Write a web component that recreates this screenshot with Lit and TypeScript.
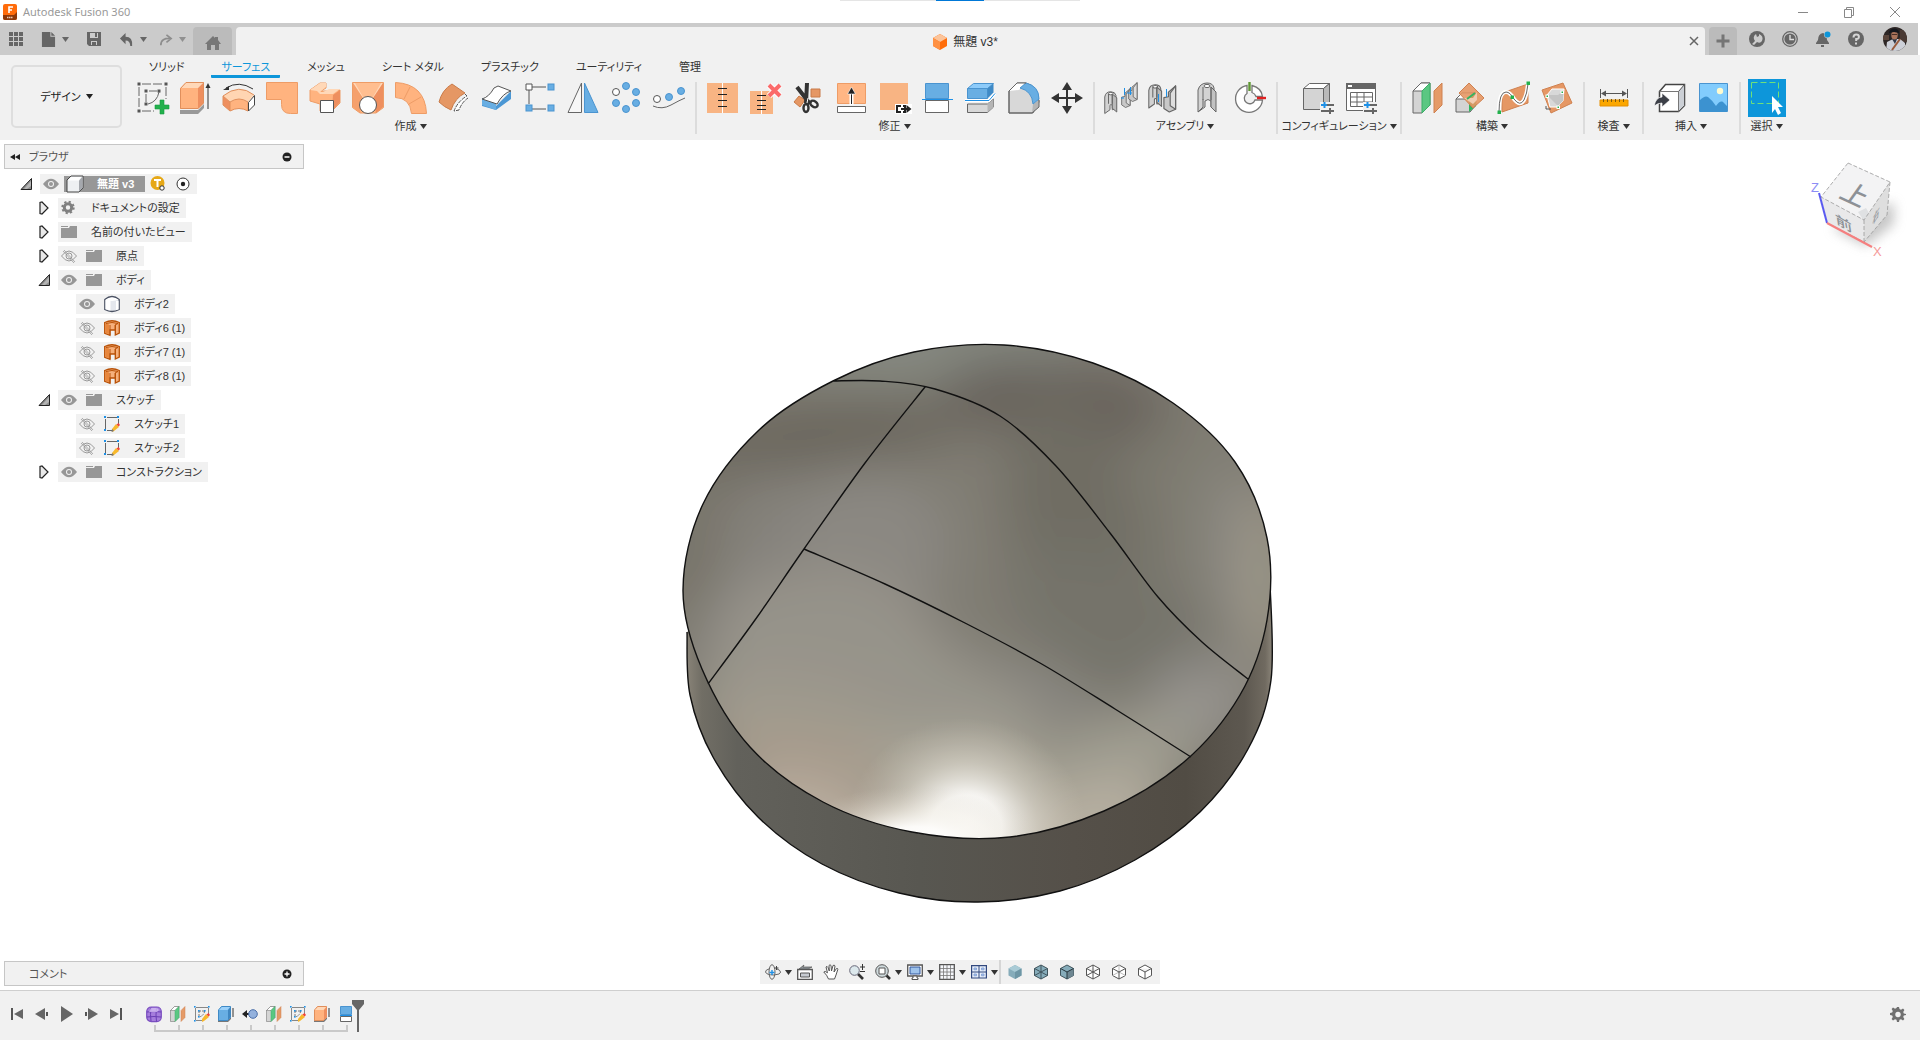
import { LitElement, html, css, svg, nothing, TemplateResult } from "lit";
import { customElement, property, state } from "lit/decorators.js";
import { classMap } from "lit/directives/class-map.js";

type Art = TemplateResult;

/* ---------- shared drawing pieces ---------- */

const planeArt = svg`
  <path d="M1 9 9 1h9v22l-8 8H1z" fill="#d4d4d4" stroke="#666"/>
  <path d="M1 9 9 1h9l-8 8z" fill="#fff" stroke="#666"/>
  <path d="M10 9 18 1v22l-8 8z" fill="#5bc782" stroke="#3cae68"/>
  <path d="M22 9 30 1v22l-8 8z" fill="#e59b68" stroke="#cf8150"/>`;

const sliders = svg`
  <g transform="translate(18 20)" stroke-width="2" fill="none">
    <path d="M1 3h13M1 9h13M10 6v6" stroke="#666"/>
    <path d="M4.500 0v6M1 3h6" stroke="#1e90e6"/>
  </g>`;

const hinge = (x: number, y: number, s: number) => svg`
  <g transform="translate(${x} ${y}) scale(${s})" stroke="#666" stroke-width="1.300" stroke-linejoin="round">
    <path d="M1 30V8Q2 1 9 1q6 0 7 5v18l-5 1v-6q-2-2-3 0v6z" fill="#d2d2d2"/>
    <path d="M11 4l6 5v19l-6-5z" fill="#b9b9b9"/>
    <ellipse cx="9" cy="3.500" rx="3" ry="1.600" fill="#fff"/>
    <path d="M6 4v13M11 4v13" fill="none"/>
  </g>`;

const wing = (x: number, y: number, s: number) => svg`
  <g transform="translate(${x} ${y}) scale(${s})" stroke="#666" stroke-width="1.300" stroke-linejoin="round">
    <path d="M1 14l5-1V8l8-7v26l-7 3-6-4z" fill="#c8c8c8"/>
    <path d="M8 9l6-8v26l-6-4z" fill="#dedede"/>
  </g>`;

const dots = (pts: number[][], r: number, fill: string, stroke: string) =>
  pts.map(([x, y]) => svg`<circle cx=${x} cy=${y} r=${r} fill=${fill} stroke=${stroke}/>`);

const squares = (pts: number[][], s: number, fill: string, stroke: string) =>
  pts.map(([x, y]) => svg`<rect x=${x} y=${y} width=${s} height=${s} fill=${fill} stroke=${stroke}/>`);

const art: Record<string, Art> = {
  /* create */
  sketch: svg`
    <path d="M5 2h22M2 5v22M5 29h12M29 5v12" stroke="#666" fill="none" stroke-dasharray="9 2"/>
    <path d="M12 9h8M9 12v8M22 10Q20 20 11 22" stroke="#666" fill="none"/>
    ${squares([[1, 1], [28, 1], [1, 28], [8, 8], [21, 8], [8, 21]], 2, "#555", "#555")}
    <path d="M23 18h4v5h5v4h-5v5h-4v-5h-5v-4h5z" fill="#22b14c" stroke="#169a3f" stroke-width=".6"/>`,
  extrude: svg`
    <path d="M0 28h18l6-6v4l-6 6H0z" fill="#999"/>
    <path d="M0 6 6 0h18l-6 6z" fill="#ffd8b8"/><path d="M0 6h18v21H0z" fill="#ffb37f"/>
    <path d="M18 6l6-6v21l-6 6z" fill="#ee8f5f"/>
    <path d="M.500 6.500 6 .500h17.500V21L18 26.500H.500z" fill="none" stroke="#e08f5c"/>
    <path d="M28 27V3" stroke="#333"/><path d="M28 1l-2.500 5h5z" fill="#333"/>`,
  revolve: svg`
    <path d="M3 6Q16-2 30 7" fill="none" stroke="#333"/><path d="M0 8l6-4v4z" fill="#333"/>
    <path d="M0 14Q16 1 31 13l-6 7Q16 14 7 20z" fill="#ffd5b2"/>
    <path d="M0 14l7 6v9l-7-6z" fill="#ee8f5f"/>
    <path d="M7 20q9-6 18 0v9q-9-5-18 0z" fill="#ffb37f"/>
    <path d="M0 14Q16 1 31 13M0 14l7 6v9l-7-6zM7 20q9-6 18 0v9q-9-5-18 0" fill="none" stroke="#e08f5c"/>
    <path d="M25.500 20.500l6-7V23l-6 6z" fill="#fff" stroke="#444"/>`,
  sweep: svg`<path d="M.500.500h31v31h-7q-9 0-9-9v-5h-15z" fill="#ffb37f" stroke="#ee9c66"/>`,
  loft: svg`
    <path d="M1 8l10-7h6v5l-5 3h10l9-1v13l-8 8H11v-7L1 19z" fill="#ffb37f" stroke="#ee9c66"/>
    <path d="M1 8l10-7h6v4l-6 5h3l6-3h11l-7 5H11L8 9z" fill="#ffd8b8"/>
    <path d="M24 13l7-5v12l-8 9z" fill="#ee8f5f"/>
    <path d="M11.500 18.500h13v12h-13z" fill="#fff" stroke="#555"/>`,
  patch: svg`
    <path d="M.500.500h31v25L24 31H8L.500 25.500z" fill="#ffb37f" stroke="#ee9c66"/>
    <path d="M1 1h30L22 17H10z" fill="#ffd8b8"/><path d="M31 1v24l-7 6-3-15z" fill="#ee8f5f"/>
    <path d="M1 1v24l7 6 3-15z" fill="#f5a06c"/><path d="M3 1h26l-8 14H11z" fill="#ffbe90"/>
    <circle cx="16" cy="23" r="8.500" fill="#fff" stroke="#555"/>`,
  ruled: svg`
    <path d="M.500.500Q30 2 31.500 31.500h-15Q15 16 .500 15.500z" fill="#ffb37f" stroke="#ee9c66"/>
    <path d="M15 5l-6 12M26 15l-12 7" stroke="#ee9c66"/>`,
  offset: svg`
    <path d="M1 20Q4 8 14 2l13 9Q17 16 13 28 6 25 1 20z" fill="#e59764" stroke="#c97b49"/>
    <path d="M27 12l2 2Q20 19 16 29l5-1q3-8 9-12" fill="#fff" stroke="#555" stroke-dasharray="4 1"/>`,
  thicken: svg`
    <path d="M1 16l14 8L30 9v8L15 28 1 24z" fill="#4b97d4"/><path d="M1 16l14 5v7L1 23z" fill="#68aee3"/>
    <path d="M1 17Q8 15 13 6l4-2 13 5q-8 2-14 13z" fill="#fff" stroke="#555"/>`,
  rectPattern: svg`
    <path d="M8 5h14M5 8v14M8 27h14" stroke="#555"/>
    <path d="M2 2h6v6H2z" fill="#fff" stroke="#555"/>
    ${squares([[24, 2], [2, 23], [24, 23]], 6, "#68aee3", "#4a94d0")}`,
  mirror: svg`
    <path d="M1 30.500 14.500 1v29.500z" fill="#f7f7f7" stroke="#666"/>
    <path d="M17.500 1 31 30.500H17.500z" fill="#68aee3" stroke="#4a94d0"/>`,
  circPattern: svg`
    ${dots([[16, 4], [26, 10], [26, 21], [16, 27], [6, 21]], 3.5, "#68aee3", "#4a94d0")}
    <circle cx="6" cy="10" r="3.500" fill="#fff" stroke="#555"/>`,
  pathPattern: svg`
    <circle cx="4" cy="17" r="3.500" fill="#fff" stroke="#555"/>
    ${dots([[16, 15], [28, 9]], 3.5, "#68aee3", "#4a94d0")}
    <path d="M0 24q9 4 18-1t14-7" fill="none" stroke="#666"/>`,
  /* modify */
  stitch: svg`
    <path d="M0 1h15v30H0zM16 1h15v30H16z" fill="#f8b483"/><path d="M15.500 1v30" stroke="#fff"/>
    <path d="M11 6.500h9M11 12.500h9M11 18.500h9M11 24.500h9" stroke="#222"/>`,
  unstitch: svg`
    <path d="M0 9h23v23H0z" fill="#f8b483"/><path d="M11.500 9v23" stroke="#fff"/>
    <path d="M7 13.500h9M7 18.500h9M7 23.500h9M7 27.500h9" stroke="#222"/>
    <path d="M19 3l11 11M30 3 19 14" stroke="#fff" stroke-width="6"/>
    <path d="M19 3l11 11M30 3 19 14" stroke="#fb6a6a" stroke-width="4"/>`,
  trim: svg`
    <path d="M18 7h9v8h-9z" fill="#e59764" stroke="#c97b49"/><path d="M6 14l6 4-5 7-6-5z" fill="#e59764" stroke="#c97b49"/>
    <path d="M4 5l13 17M14 1l-1 20" stroke="#333" stroke-width="4"/>
    <ellipse cx="13" cy="26" rx="2.500" ry="4" fill="none" stroke="#333" stroke-width="2.400"/>
    <ellipse cx="21" cy="22" rx="4" ry="2.800" transform="rotate(35 21 22)" fill="none" stroke="#333" stroke-width="2.400"/>
    <path d="M15 16l-1 5" stroke="#fff"/>`,
  extend: svg`
    <path d="M1.500 1.500h28v20h-28z" fill="#ffb684" stroke="#ee9c66"/>
    <path d="M1.500 24.500h28v6h-28z" fill="#fff" stroke="#666"/>
    <path d="M15.500 23V9" stroke="#fff" stroke-width="4"/><path d="M15.500 22V8" stroke="#222"/>
    <path d="M15.500 5l-4 7h8z" fill="#222" stroke="#fff" stroke-width=".6"/>`,
  scale: svg`
    <path d="M1 1h28v27H1z" fill="#f8b483"/><path d="M16 22h17v10H16z" fill="#fff"/>
    <path d="M22 24h-4v6h4M24 24h2v2M24 30h2v-2" stroke="#222" stroke-width="2" fill="none"/>
    <path d="M22 27h7" stroke="#222" stroke-width="2"/><path d="M27.500 23l5 4-5 4z" fill="#222"/>`,
  splitFace: svg`
    <path d="M3.500 1.500h23v15h-23z" fill="#68aee3" stroke="#4a94d0"/><path d="M3.500 18.500h23v12h-23z" fill="#fff" stroke="#666"/>
    <path d="M0 17.500h31" stroke="#1e90e6"/>`,
  splitBody: svg`
    <path d="M2.500 22h20l6-5v8l-6 5.500h-20z" fill="#d8d8d8" stroke="#666"/><path d="M22.500 22l6-5v8l-6 5.500z" fill="#b5b5b5"/>
    <path d="M2.500 6.500l6-5h20l-6 5z" fill="#8dcbfa" stroke="#4a94d0"/><path d="M2.500 6.500h20v10h-20z" fill="#68aee3" stroke="#4a94d0"/>
    <path d="M22.500 6.500l6-5v9l-6 6z" fill="#3f8ac6"/><path d="M0 18.500h24l6-7" fill="none" stroke="#fff" stroke-width="3"/>
    <path d="M0 18.500h24l6-7" fill="none" stroke="#1e90e6"/>`,
  fillet: svg`
    <path d="M1 9l8-8h9q12 3 13 19l-6 11H1z" fill="#d8d8d8" stroke="#666"/><path d="M1 9l8-8h8l-6 7z" fill="#fff"/>
    <path d="M25 22l6-4v7l-7 6z" fill="#b5b5b5"/><path d="M12 6l6-5q13 3 13 16l-6 5Q24 9 12 6z" fill="#68aee3" stroke="#4a94d0"/>
    <path d="M1 9l8-8h9M1 9v22h23l7-6v-7" fill="none" stroke="#666"/>`,
  move: svg`
    <path d="M16 4v24M4 16h24" stroke="#333" stroke-width="2"/>
    <path d="M16 0l5 8H11zM16 32l5-8H11zM0 16l8-5v10zM32 16l-8-5v10z" fill="#333"/>`,
  /* assemble */
  newComponent: svg`${hinge(-1, 9, 0.75)}${wing(16, 6, 0.65)}${wing(23, 0, 0.65)}
    <path d="M19.500 6v7M16 16h3M25.500 5v8M22 11h5" stroke="#1e90e6"/>`,
  joint: svg`${hinge(0, 2, 0.8)}${wing(15, 3, 0.9)}
    <path d="M10.500 12v8M18.500 7v8" stroke="#1e90e6"/>`,
  asBuilt: svg`
    <path d="M7 30V8Q9 1 16 1q6 0 7 5v18l-3 1v-6q-3-3-6 0v6z" fill="#d2d2d2" stroke="#666"/>
    <path d="M20 5l5 5v20l-5-5z" fill="#c2c2c2" stroke="#666"/><path d="M12 5v13M20 5v13M7 30l5-5v-8" fill="none" stroke="#666"/>
    <ellipse cx="16" cy="4" rx="3" ry="1.600" fill="#fff" stroke="#666"/>`,
  jointOrigin: svg`
    <path d="M13 3.500A13.500 13.500 0 1 0 28.500 18H21a5.500 5.500 0 1 1-8-6.500z" fill="#fff" stroke="#777" stroke-width="1.300"/>
    <path d="M18 3.500v7q3 1 4 4h6.500q-1-8.500-10.500-11z" fill="#fff" stroke="#777" stroke-width="1.300"/>
    <path d="M15.500 0v9" stroke="#5e9732" stroke-width="2.400"/><path d="M23 16h9" stroke="#e02020" stroke-width="2.400"/>`,
  /* configure */
  configure: svg`
    <path d="M1.500 6.500l6-5h20l-6 5z" fill="#fff" stroke="#666"/><path d="M1.500 6.500h20v21h-20z" fill="#d4d4d4" stroke="#666"/>
    <path d="M21.500 6.500l6-5v20l-6 6z" fill="#b9b9b9" stroke="#666"/><path d="M18 20h14v12H18z" fill="#f1f1f1"/>${sliders}`,
  configTable: svg`
    <path d="M1.500 1.500h29v27h-29z" fill="#fff" stroke="#666"/><path d="M1 1h30v6H1z" fill="#666"/><path d="M3 3h4v2H3z" fill="#fff"/>
    <path d="M5.500 10.500h22v14h-22zM5 15h23M5 20h23M12 10v15M19 10v15" fill="none" stroke="#666"/>
    <path d="M18 20h14v12H18z" fill="#f1f1f1"/>${sliders}`,
  /* construct */
  plane: planeArt,
  planeAngle: svg`
    <path d="M1 17l6-6h14v12l-6 7H1z" fill="#d4d4d4" stroke="#666"/><path d="M1 17l6-6h14l-6 6z" fill="#fff" stroke="#666"/>
    <path d="M14 17l7-6v13l-7 6z" fill="#2fb45e"/>
    <path d="M14 1l15 15-11 10L4 11z" fill="#e59764" fill-opacity=".9" stroke="#cf8150"/>
    <path d="M9 16h9l4-6v8l-4 4z" fill="#f0ccb2"/><path d="M12 17l8-6" stroke="#35b35f" stroke-width="2"/>`,
  planePath: svg`
    <path d="M4 11l26-9v19L4 30z" fill="#e59764" stroke="#cf8150"/>
    <path d="M1 30Q1 10 8 10q4 0 8 7 6 8 10 1 3-6 4-16" fill="none" stroke="#fff" stroke-width="4"/>
    <path d="M1 30Q1 10 8 10q4 0 8 7 6 8 10 1 3-6 4-16" fill="none" stroke="#666"/>
    ${squares([[0, 29], [13, 14], [29, 0]], 2.5, "#22b14c", "#22b14c")}`,
  planePoints: svg`
    <path d="M1 8l21-7 9 20-21 10z" fill="#e59764" stroke="#cf8150"/>
    <path d="M6 13l5-6h12l-1 12-6 6H9z" fill="#d8d8d8" stroke="#fff"/><path d="M6 13h11l6-5-1 11-5 5z" fill="#c4c4c4"/>
    <path d="M5 24v3h5" fill="none" stroke="#555"/>
    ${squares([[5, 13], [20, 9], [16, 24]], 2.5, "#22b14c", "#fff")}`,
  measure: svg`
    <path d="M2.500 7v9M29.500 7v9M4 11.500h24" stroke="#555"/><path d="M3 11.500l5-3v6zM29 11.500l-5-3v6z" fill="#555"/>
    <path d="M2 18h28v6H2z" fill="#fba700" stroke="#e58f00"/>
    <path d="M5.500 17v3M9.500 17v3M13.500 17v3M17.500 17v3M21.500 17v3M25.500 17v3" stroke="#7a5a10"/>`,
  insert: svg`
    <path d="M5.500 9.500l6-7h19v21l-6 6h-19z" fill="#fff" stroke="#444" stroke-width="1.500"/>
    <path d="M24.500 9.500l6-7v21l-6 6z" fill="#ccd0d6" stroke="#555"/><path d="M5.500 9.500h19v20" fill="none" stroke="#777"/>
    <path d="M0 24q2-9 8-9v-4l8 7-8 7v-4q-4 0-8 3z" fill="#3c3f47" stroke="#fff" stroke-width=".7"/>`,
  canvas: svg`
    <path d="M2.500 1.500h28v28h-28z" fill="#82ccfd" stroke="#4a94d0"/><circle cx="23" cy="9" r="3.200" fill="#fffbd0"/>
    <path d="M3 18q5-5 8-3 5 4 8 9 5-7 8-3l3 3v6H3z" fill="#3c92d0"/>`,
  select: svg`
    <path d="M-3-3h38v38H-3z" fill="#0d96da"/><path d="M.500.500h27v21H.500z" fill="none" stroke="#6fe07a" stroke-dasharray="6 3"/>
    <path d="M21 14l11 11h-5l3 6-3 2-3-6-3 4z" fill="#fff"/>`,
  /* 16px set */
  apps: svg`<path d="M1 1h4v4H1zM6 1h4v4H6zM11 1h4v4h-4zM1 6h4v4H1zM6 6h4v4H6zM11 6h4v4h-4zM1 11h4v4H1zM6 11h4v4H6zM11 11h4v4h-4z" fill="#666"/>`,
  file: svg`<path d="M1 0h9v5h5v11H1z" fill="#666"/><path d="M11 0l4 4h-4z" fill="#666"/>`,
  save: svg`<path d="M1 1h14v14H3l-2-2z" fill="#666"/><path d="M4 2h8v5H4z" fill="#ccc"/><path d="M9 2h2v4H9z" fill="#666"/><path d="M5 10h6v4H5z" fill="#ccc"/><path d="M6 11h4v3H6z" fill="#666"/>`,
  undo: svg`<path d="M7 1v4q8 0 7 10h-2q0-6-5-6v4L1 7z" fill="#666"/>`,
  redo: svg`<path d="M9 3l5 4-5 4M14 7Q3 6 3 14" fill="none" stroke="#8d8d8d" stroke-width="1.800"/>`,
  home: svg`<path d="M8 1l2 2V2h3v3l3 4h-2v6h-4v-5H6v5H2V9H0z" fill="#777"/>`,
  close: svg`<path d="M4 4l8 8M12 4l-8 8" stroke="#666" stroke-width="1.500"/>`,
  plus: svg`<path d="M6.500 1.500h3v5h5v3h-5v5h-3v-5h-5v-3h5z" fill="#757575"/>`,
  extensions: svg`<circle cx="8" cy="8" r="8" fill="#666"/><path d="M3 13l3-3q-3-4 1-7l1 3 2-1V3q5 2 3 7-2 3-5 1l-3 3z" fill="#ccc"/>`,
  clock: svg`<circle cx="8" cy="8" r="7.300" fill="none" stroke="#666" stroke-width="1.300"/><circle cx="8" cy="8" r="5.600" fill="#666"/><path d="M8 4v4.500h4" fill="none" stroke="#ddd" stroke-width="1.400"/>`,
  bell: svg`<path d="M8 2q4 1 4 7l2 3v1H1v-1l2-3q0-6 5-7z" fill="#666"/><path d="M6 14h3v2H6z" fill="#666"/><circle cx="12.500" cy="3.500" r="3.500" fill="#ccc"/><circle cx="12.500" cy="3.500" r="3" fill="#0d96da"/>`,
  help: svg`<circle cx="8" cy="8" r="8" fill="#666"/><path d="M5.500 6.500q0-3 2.700-3t2.700 2.300-2.700 2.200v2M8 11.500v2" fill="none" stroke="#d5d5d5" stroke-width="2"/>`,
  cube: svg`<path d="M8 0l7 4v8l-7 4-7-4V4z" fill="#ff6d0a"/><path d="M8 0l7 4-7 4-7-4z" fill="#fcc49a"/><path d="M1 4l7 4v8l-7-4z" fill="#ff9143"/>`,
  minimize: svg`<path d="M3 8.500h10" stroke="#888"/>`,
  restore: svg`<path d="M3.500 5.500h7v8h-7zM5.500 5V3.500h7v8H11" fill="none" stroke="#888"/>`,
  winClose: svg`<path d="M3 3l10 10M13 3L3 13" stroke="#888"/>`,
  gear: svg`<path d="M7 1h2l.5 2 1.500.7 2-1.200 1.400 1.400-1.200 2 .6 1.600L16 8v1l-2.200.5-.6 1.500 1.200 2-1.400 1.400-2-1.200-1.500.6L9 16H7l-.5-2.200-1.500-.6-2 1.200L1.600 13l1.200-2-.6-1.500L0 9V7l2.200-.5L2.800 5 1.600 3 3 1.600l2 1.200L6.500 2z" fill="#707070"/><circle cx="8" cy="8.500" r="2.700" fill="#f1f1f1"/>`,
  gearSmall: svg`<circle cx="7" cy="7.500" r="3.700" stroke="#808080" stroke-width="3"/><circle cx="7" cy="7.500" r="5.700" stroke="#808080" stroke-width="2" stroke-dasharray="2.200 2.270"/>`,
  folder: svg`<path d="M0 2h7v1H0zM0 4h8l1-2h7v12H0z" fill="#979797"/>`,
  eye: svg`<path d="M0 8q8-10.500 16 0-8 10.500-16 0z" fill="#979797"/><circle cx="8" cy="8" r="3" fill="#f1f1f1"/><circle cx="8" cy="8" r="2" fill="#979797"/>`,
  eyeOff: svg`<path d="M.500 8q7.500-10 15 0-7.500 10-15 0z" fill="none" stroke="#999"/><circle cx="8" cy="8" r="3" fill="none" stroke="#999"/><path d="M3 2l11 12M2 3l11 12" stroke="#999" stroke-width=".8"/>`,
  component: svg`<path d="M0 4l4-4h12v12l-4 4H0z" fill="#eef0f2" stroke="#444"/><path d="M1 4.500L4.500 1H15l-3 3.500z" fill="#fff"/><path d="M12 4.500l3.500-4V12L12 15.500z" fill="#a5a8ad"/>`,
  body: svg`<path d="M.800 3.500Q8-2.500 15.200 3.500v10q-7.200 4-14.400 0z" fill="#e4e7ed" stroke="#4b5263" stroke-width="1.300"/><path d="M1.500 4h5v10.500l-5-1.200zM12 5h2.500v8.500L12 14z" fill="#fff"/><path d="M1.500 3.800Q8-1 14.500 3.800 8 6 1.500 3.800z" fill="#fff"/>`,
  surface: svg`<path d="M.700 2.500Q8-1 15.300 2.500V13l-4 2v-5H6v5.300l-5.300-2z" fill="#f6b07c" stroke="#b95208" stroke-width="1.300"/><path d="M1.500 3.500L5 4.500V14l-3.500-1z" fill="#e8863c"/><path d="M2 3.500q6-2 12 0l-3 1.500v5M6 5v10M11.500 5v9" fill="none" stroke="#b95208"/>`,
  sketchItem: svg`<path d="M3 1.500h10M1.500 3v10M14.500 3v6M3 14.500h5" stroke="#666" fill="none"/>${squares([[0, 0], [13, 0], [0, 13]], 2, "#1e90e6", "none")}<path d="M8 13l4-5 3 3-5 4-2 1z" fill="#f8b92c"/><path d="M12.500 8.500l2-1.500 1.500 2-1.500 1.500z" fill="#f0433a"/><path d="M8 13l2 2-2.500 1z" fill="#777"/>`,
  tHot: svg`<circle cx="7.500" cy="7" r="7" fill="#e6a817"/><path d="M4 4h7M7.500 4v7" stroke="#fff" stroke-width="2"/><circle cx="12" cy="12" r="2.200" fill="#fff" stroke="#333"/>`,
  radio: svg`<circle cx="8" cy="8" r="6" fill="#fff" stroke="#333"/><circle cx="8" cy="8" r="2.200" fill="#222"/>`,
  open: svg`<path d="M13.500 2.500v11H3z" fill="#8c8c8c" stroke="#222"/><path d="M13 5v5L9 13H6z" fill="#b5b5b5"/>`,
  closed: svg`<path d="M4 2.500v11l2 .5 6-6-6-6z" fill="#e9e9e9" stroke="#222" stroke-width="1.200"/>`,
  collapse: svg`<path d="M3 8l5-3v6zM8 8l5-3v6z" fill="#222"/>`,
  minusDot: svg`<circle cx="8" cy="8" r="4.500" fill="#222"/><path d="M5.500 8h5" stroke="#fff" stroke-width="1.500"/>`,
  plusDot: svg`<circle cx="8" cy="8" r="4.500" fill="#222"/><path d="M5.500 8h5M8 5.500v5" stroke="#fff" stroke-width="1.300"/>`,
  /* navigation bar */
  orbit: svg`<ellipse cx="7" cy="8" rx="3" ry="7.300" fill="none" stroke="#666"/><path d="M5 4.500Q0 6 .500 8q1 3 8.500 3l5-1q1.500-1 1.500-2 0-2-4.500-3.500" fill="none" stroke="#666"/><path d="M11.500 2v4M9.500 4h4" stroke="#444"/><path d="M7 6v5M4.500 8.500h5" stroke="#1e90e6" stroke-width="1.400"/>`,
  lookAt: svg`<path d="M.700 5.500h14.600v9.800H.700z" fill="#fff" stroke="#555" stroke-width="1.300"/><path d="M3.500 9h9v4h-9z" fill="#c7cbd1" stroke="#555"/><path d="M2 5l5-4-1 2h9L11 5z" fill="#8b9297" stroke="#555" stroke-width=".7"/>`,
  pan: svg`<path d="M5.500 15Q4 11 .800 8q1-1.500 3.700.8L3 3q1-1.500 2 .5L6.300 7 6 1.500q1-1.500 2 0L8.500 7 10 1.500q1.500-1 2 .5L11 8l2.500-3.500q1.500-.5 1.300 1L13 11l-1.500 4z" fill="#fff" stroke="#555"/>`,
  zoom: svg`<path d="M9 10l5 5" stroke="#333" stroke-width="2.600"/><circle cx="5.500" cy="6.500" r="4.800" fill="#dce8ec" stroke="#667" /><path d="M13.500 0v6M11 3h5M11 7.500h5" stroke="#333"/>`,
  fit: svg`<path d="M10 10l5 5" stroke="#333" stroke-width="2.600"/><circle cx="7" cy="7" r="6.300" fill="#cfdadd" stroke="#555"/><path d="M4 4h6v6H4z" fill="#fff" stroke="#555"/>`,
  display: svg`<path d="M.700 1h14.600v11H.700z" fill="#fff" stroke="#555" stroke-width="1.300"/><path d="M3 3h10v7H3z" fill="#9fc3eb" stroke="#31569d"/><path d="M6 12h4v2h1v1.500H5V14h1z" fill="#fff" stroke="#555"/>`,
  grid: svg`<path d="M.700.700h14.600v14.600H.700z" fill="#f4f6fa" stroke="#555" stroke-width="1.300"/><path d="M4.500 1v14M8 1v14M11.500 1v14M1 4.500h14M1 8h14M1 11.500h14" stroke="#777" stroke-width=".8"/>`,
  viewports: svg`<path d="M.600 1.600h14.800v12.400H.600z" fill="#e8effa" stroke="#31487e" stroke-width="1.200"/><path d="M8 2v12M0 8h16" stroke="#31487e"/><path d="M3 4h2.500v1.800H3zM10.500 4H13v1.800h-2.500zM3 10h2.500v1.800H3zM10.500 10H13v1.800h-2.500z" fill="#9fc3eb" stroke="#8aa5d8"/>`,
  shade1: svg`<path d="M8 1l6.500 3.500v7L8 15l-6.500-3.500v-7z" fill="#86acba"/><path d="M8 1l6.500 3.500L8 8 1.500 4.500z" fill="#a9cbd6"/><path d="M8 8l6.500-3.500v7L8 15z" fill="#6e96a5"/>`,
  shade2: svg`<path d="M8 1l6.500 3.500v7L8 15l-6.500-3.500v-7z" fill="#86acba" stroke="#40545c"/><path d="M1.500 4.500L8 8l6.500-3.500M8 1v14M8 8l-6.500 3.500M8 8l6.500 3.500" stroke="#40545c" fill="none"/>`,
  shade3: svg`<path d="M8 1l6.500 3.500v7L8 15l-6.500-3.500v-7z" fill="#86acba" stroke="#40545c"/><path d="M8 8l6.500-3.500v7L8 15z" fill="#6e8792"/><path d="M1.500 4.500L8 8l6.500-3.500M8 8v7" stroke="#26363d" fill="none"/>`,
  wire1: svg`<path d="M8 1l6.500 3.500v7L8 15l-6.500-3.500v-7zM1.500 4.500L8 8l6.500-3.500M8 1v14M8 8l-6.500 3.500M8 8l6.500 3.500" fill="#fff" stroke="#555"/>`,
  wire2: svg`<path d="M8 1l6.500 3.500v7L8 15l-6.500-3.500v-7z" fill="#fff" stroke="#555"/><path d="M8 1v7l-6.500 3.500M8 8l6.500 3.500" fill="none" stroke="#bbb"/><path d="M1.500 4.500L8 8l6.500-3.500M8 8v7" fill="none" stroke="#555"/>`,
  wire3: svg`<path d="M8 1l6.500 3.500v7L8 15l-6.500-3.500v-7zM1.500 4.500L8 8l6.500-3.500M8 8v7" fill="#fff" stroke="#555"/>`,
  /* playback */
  first: svg`<path d="M4 2v12" stroke="#555" stroke-width="2"/><path d="M15 3v10L6 8z" fill="#666"/>`,
  prev: svg`<path d="M12 2v12L2 8z" fill="#666"/><path d="M14 6v4" stroke="#555" stroke-width="2"/>`,
  play: svg`<path d="M3 0l12 8-12 8z" fill="#666"/>`,
  next: svg`<path d="M5 2v12l10-6z" fill="#666"/><path d="M3 6v4" stroke="#555" stroke-width="2"/>`,
  last: svg`<path d="M13 2v12" stroke="#555" stroke-width="2"/><path d="M2 3v10l9-5z" fill="#666"/>`,
  /* timeline features */
  form: svg`<rect x=".7" y="1" width="14.600" height="14.600" rx="4.500" fill="#a57ddc" stroke="#7a4fc0" stroke-width="1.200"/><path d="M5 1.500q-1 7 0 13.500M10.500 2q-1 7 0 13.500M1 6q7-1 14 0M1 11q7-1 14 0" stroke="#6a3fb4" fill="none"/><path d="M5 2h6l2 2-2 2H3z" fill="#d3bdf2" opacity=".8"/>`,
  planeSmall: svg`<g transform="scale(.5)">${planeArt}</g>`,
  sketchSmall: svg`<path d="M2 1.500h12M1.500 2v12M14.500 2v8M2 14.500h7" stroke="#888" fill="none"/><path d="M5 5h5M5 5v6M10.500 5q0 4-5 6" stroke="#777" fill="none" stroke-dasharray="2 1"/>${squares([[0, 0], [14, 0], [0, 14], [4, 4], [10, 4], [4, 10]], 1.6, "#1e90e6", "none")}<path d="M8 13l4-5 3 3-5 4-2 1z" fill="#f8b92c"/><path d="M12.500 8.500l2-1.500 1.500 2-1.500 1.500z" fill="#f0433a"/>`,
  extrudeBlue: svg`<path d="M0 14h10l3-3v2l-3 3H0z" fill="#777"/><path d="M.500 4l3-3.500h9V11l-3 3.500h-9z" fill="#68aee3" stroke="#3f8ac6"/><path d="M10 4l3-3.500V11l-3 3z" fill="#3f86c0"/><path d="M1 4l3-3h8L9.500 4z" fill="#9bd1fa"/><path d="M15 11V2" stroke="#333"/>`,
  pushPull: svg`<path d="M0 8l5-4v3h5v2H5v3z" fill="#222"/><circle cx="11" cy="8" r="4.300" fill="#93b1dd" stroke="#4a6ea8"/>`,
  extrudeOrange: svg`<path d="M0 14h10l3-3v2l-3 3H0z" fill="#777"/><path d="M.500 4l3-3.500h9V11l-3 3.500h-9z" fill="#ffb37f" stroke="#e08f5c"/><path d="M10 4l3-3.500V11l-3 3z" fill="#ee8f5f"/><path d="M1 4l3-3h8L9.500 4z" fill="#ffd8b8"/><path d="M15 11V2" stroke="#333"/>`,
  splitSmall: svg`<path d="M2.500.500h11v8h-11z" fill="#68aee3" stroke="#4a94d0"/><path d="M2.500 10.500h11v5h-11z" fill="#fff" stroke="#666"/><path d="M2 9.500h12" stroke="#1e90e6"/>`,
};

@customElement("tool-icon")
class ToolIcon extends LitElement {
  @property() name = "";
  @property({ type: Number }) size = 16;

  static styles = css`
    :host { display: block; flex: none; line-height: 0; }
    .icon { display: block; overflow: visible; }
  `;

  render() {
    return html`<svg class="icon" aria-hidden="true" width=${this.size} height=${this.size}
      viewBox="0 0 ${this.size > 20 ? 32 : 16} ${this.size > 20 ? 32 : 16}" fill="none">${art[this.name] ?? nothing}</svg>`;
  }
}

const icon = (name: string, size = 16) => html`<tool-icon .name=${name} .size=${size}></tool-icon>`;

const caret = html`<svg width="7" height="5" viewBox="0 0 7 5" aria-hidden="true"><path d="M0 0h7L3.500 5z" fill="currentColor"/></svg>`;

const base = css`
  :host, * { box-sizing: border-box; }
  button {
    display: flex; align-items: center; justify-content: center;
    padding: 0; border: 0; background: none; color: inherit;
    font: inherit; font-feature-settings: inherit; white-space: nowrap; cursor: default;
  }
  svg { flex: none; }
`;

/* ---------- title bar and document bar ---------- */

@customElement("app-header")
class AppHeader extends LitElement {
  static styles = [base, css`
    :host { display: block; }
    .title { position: relative; display: flex; align-items: center; height: 23px; padding: 0 2px 0 3px; background: #fff; color: #999; }
    .name { margin: 0 auto 0 6px; font-family: "Noto Sans", "Open Sans", sans-serif; font-weight: 400; font-size: 11px; }
    .window { width: 46px; height: 20px; }
    .grip { position: absolute; top: 0; left: 50%; width: 240px; height: 1px; margin-left: -120px; background: linear-gradient(90deg, #e5e5e5 40%, #0078d7 40% 60%, #e5e5e5 60%); }
    .bar { display: flex; align-items: stretch; height: 32px; margin-right: 2px; padding: 4px 11px 0 8px; background: #cbcbcb; color: #666; }
    .quick { display: flex; align-items: center; gap: 17px; padding: 0 7px 4px 0; }
    .history { display: flex; gap: 11px; }
    .drop { gap: 6px; }
    .faded { color: #909090; }
    .home { width: 39px; border-radius: 4px 4px 0 0; background: #bbb; padding-top: 4px; }
    .doc { flex: 1; display: flex; align-items: center; margin: 0 4px; padding-right: 3px; border-radius: 4px 4px 0 0; background: #f1f1f1; color: #333; }
    .docname { flex: 1; display: flex; align-items: center; justify-content: center; gap: 5px; padding: 2px 0 0 8px; font-size: 12px; }
    .add { width: 28px; border-radius: 4px 4px 0 0; background: #bbb; }
    .account { display: flex; align-items: center; gap: 17px; padding: 0 0 4px 12px; }
    .avatar { margin-left: 2px; }
  `];

  render() {
    return html`
      <div class="title">
        <svg width="14" height="16" viewBox="0 0 14 16" aria-hidden="true">
          <rect width="14" height="16" rx="2" fill="#ff6b0a"/><path d="M0 11h11l3-3v6q0 2-2 2H2q-2 0-2-2z" fill="#8d3708"/>
          <path d="M6 9V3h4M6 6h3" stroke="#fff" stroke-width="1.600" fill="none"/><path d="M4 13.500h6" stroke="#e8c9b5" stroke-width="1.500" stroke-dasharray="1.500 .5"/>
        </svg>
        <h1 class="name">Autodesk Fusion 360</h1>
        <button class="window" aria-label="最小化">${icon("minimize")}</button>
        <button class="window" aria-label="元に戻す">${icon("restore")}</button>
        <button class="window" aria-label="閉じる">${icon("winClose")}</button>
        <div class="grip"></div>
      </div>
      <div class="bar">
        <div class="quick">
          <button aria-label="データ パネル">${icon("apps")}</button>
          <button class="drop" aria-label="ファイル">${icon("file", 15)}${caret}</button>
          <button aria-label="保存">${icon("save")}</button>
          <div class="history">
            <button class="drop" aria-label="元に戻す">${icon("undo", 15)}${caret}</button>
            <button class="drop faded" aria-label="やり直し">${icon("redo", 15)}${caret}</button>
          </div>
        </div>
        <button class="home" aria-label="ホーム">${icon("home")}</button>
        <div class="doc">
          <div class="docname">${icon("cube")}<span>無題 v3*</span></div>
          <button aria-label="ドキュメントを閉じる">${icon("close")}</button>
        </div>
        <button class="add" aria-label="新規">${icon("plus")}</button>
        <div class="account">
          <button aria-label="拡張機能">${icon("extensions")}</button>
          <button aria-label="ジョブの状態">${icon("clock")}</button>
          <button aria-label="通知">${icon("bell")}</button>
          <button aria-label="ヘルプ">${icon("help")}</button>
          <button class="avatar" aria-label="プロファイル">
            <svg width="24" height="24" viewBox="0 0 24 24" aria-hidden="true">
              <defs><clipPath id="round"><circle cx="12" cy="12" r="12"/></clipPath></defs>
              <g clip-path="url(#round)">
                <path d="M0 0h24v24H0z" fill="#2e2726"/><path d="M17 3h7v12h-7z" fill="#4a3a34"/><path d="M0 8h6v5H0z" fill="#5b463c"/>
                <path d="M3 24l1-9 6-3 7 0 5 4v8z" fill="#cdd0d8"/><path d="M9 12l3 5 2-5z" fill="#333a4a"/>
                <path d="M17 12l-8 11" stroke="#9a5a3c" stroke-width="2"/><ellipse cx="11.500" cy="8" rx="3.200" ry="4.500" fill="#a9735a"/>
                <path d="M6 6q1-5 6-4.500Q16 2 16 6l-5-1z" fill="#15171d"/><path d="M9 7.500h5" stroke="#4c3028"/>
              </g>
            </svg>
          </button>
        </div>
      </div>`;
  }
}

/* ---------- ribbon ---------- */

interface ToolGroup { label: string; tools: [string, string][]; kind?: string }

const groups: ToolGroup[] = [
  { label: "作成", tools: [["sketch", "スケッチを作成"], ["extrude", "押し出し"], ["revolve", "回転"], ["sweep", "スイープ"], ["loft", "ロフト"], ["patch", "パッチ"], ["ruled", "ルールド"], ["offset", "オフセット"], ["thicken", "厚み"], ["rectPattern", "矩形状パターン"], ["mirror", "ミラー"], ["circPattern", "円形状パターン"], ["pathPattern", "パス上のパターン"]] },
  { label: "修正", tools: [["stitch", "ステッチ"], ["unstitch", "ステッチ解除"], ["trim", "トリム"], ["extend", "延長"], ["scale", "尺度"], ["splitFace", "面を分割"], ["splitBody", "ボディを分割"], ["fillet", "フィレット"], ["move", "移動"]] },
  { label: "アセンブリ", tools: [["newComponent", "新規コンポーネント"], ["joint", "ジョイント"], ["asBuilt", "位置固定ジョイント"], ["jointOrigin", "ジョイントの原点"]] },
  { label: "コンフィギュレーション", tools: [["configure", "設定"], ["configTable", "テーブル"]], kind: "wide" },
  { label: "構築", tools: [["plane", "オフセット平面"], ["planeAngle", "傾斜平面"], ["planePath", "パスに沿った平面"], ["planePoints", "3点を通過する平面"]] },
  { label: "検査", tools: [["measure", "計測"]], kind: "single" },
  { label: "挿入", tools: [["insert", "派生を挿入"], ["canvas", "キャンバス"]] },
  { label: "選択", tools: [["select", "選択"]], kind: "end" },
];

@customElement("app-ribbon")
class AppRibbon extends LitElement {
  @state() private tab = 1;
  private tabs = ["ソリッド", "サーフェス", "メッシュ", "シート メタル", "プラスチック", "ユーティリティ", "管理"];

  static styles = [base, css`
    :host { display: flex; padding: 0 0 6px 11px; background: #f1f1f1; color: #333; }
    .workspace { flex: none; width: 111px; height: 63px; margin: 10px 9px 0 0; gap: 5px; border: 2px solid #dedede; border-radius: 5px; color: #222; }
    .main { flex: 1; min-width: 0; }
    .tabs { display: flex; gap: 17px; height: 23px; padding-left: 8px; }
    .tab { padding: 3px 10px 0; border-bottom: 3px solid transparent; border-radius: 1px; font-size: 11px; }
    .tab.on { border-color: #0d96da; color: #0d96da; }
    .groups { display: flex; padding-top: 4px; }
    .group { display: flex; flex-direction: column; height: 52px; padding: 0 5px 0 4px; border-right: 2px solid #dcdcdc; }
    .group:first-child { padding-left: 0; }
    .wide { padding: 0 18px; }
    .single { padding: 0 7px; }
    .end { border: 0; }
    .tools { display: flex; }
    .tool { width: 43px; height: 32px; }
    .menu { align-self: center; gap: 3px; height: 16px; margin: 4px -18px 0; }
  `];

  render() {
    return html`
      <button class="workspace">デザイン ${caret}</button>
      <div class="main">
        <div class="tabs" role="tablist">
          ${this.tabs.map((t, i) => html`<button role="tab" aria-selected=${i === this.tab}
            class=${classMap({ tab: true, on: i === this.tab })} @click=${() => (this.tab = i)}>${t}</button>`)}
        </div>
        <div class="groups">
          ${groups.map((g) => html`
            <section class="group ${g.kind ?? ""}" aria-label=${g.label}>
              <div class="tools">${g.tools.map(([n, l]) => html`<button class="tool" aria-label=${l}>${icon(n, 32)}</button>`)}</div>
              <button class="menu">${g.label}${caret}</button>
            </section>`)}
        </div>
      </div>`;
  }
}

/* ---------- browser tree ---------- */

interface Row { depth: number; state?: "open" | "closed"; eye?: "eye" | "eyeOff"; glyph: string; label: string; root?: boolean }

const rows: Row[] = [
  { depth: 0, state: "open", eye: "eye", glyph: "component", label: "無題 v3", root: true },
  { depth: 1, state: "closed", glyph: "gearSmall", label: "ドキュメントの設定" },
  { depth: 1, state: "closed", glyph: "folder", label: "名前の付いたビュー" },
  { depth: 1, state: "closed", eye: "eyeOff", glyph: "folder", label: "原点" },
  { depth: 1, state: "open", eye: "eye", glyph: "folder", label: "ボディ" },
  { depth: 2, eye: "eye", glyph: "body", label: "ボディ2" },
  { depth: 2, eye: "eyeOff", glyph: "surface", label: "ボディ6 (1)" },
  { depth: 2, eye: "eyeOff", glyph: "surface", label: "ボディ7 (1)" },
  { depth: 2, eye: "eyeOff", glyph: "surface", label: "ボディ8 (1)" },
  { depth: 1, state: "open", eye: "eye", glyph: "folder", label: "スケッチ" },
  { depth: 2, eye: "eyeOff", glyph: "sketchItem", label: "スケッチ1" },
  { depth: 2, eye: "eyeOff", glyph: "sketchItem", label: "スケッチ2" },
  { depth: 1, state: "closed", eye: "eye", glyph: "folder", label: "コンストラクション" },
];

@customElement("browser-tree")
class BrowserTree extends LitElement {
  static styles = [base, css`
    :host { display: block; padding-top: 5px; }
    .list { display: flex; flex-direction: column; gap: 4px; margin: 0; padding: 0; list-style: none; }
    .row { display: flex; align-items: center; height: 20px; gap: 6px; padding-left: 14px; }
    .d1 { padding-left: 32px; }
    .d2 { padding-left: 50px; }
    .arrow { width: 16px; height: 20px; }
    .cell { display: flex; align-items: center; gap: 9px; height: 20px; padding: 0 6px 0 3px; background: #f1f1f1; color: #333; }
    .label { padding-left: 5px; }
    .root { display: flex; align-items: center; height: 16px; gap: 14px; padding: 0 11px 0 3px; background: #979797; color: #fff; font-weight: 700; }
    .rootcell { gap: 5px; }
    .active { margin-left: 4px; }
  `];

  render() {
    return html`<ul class="list">${rows.map((r) => html`
      <li class="row d${r.depth}">
        ${r.state ? html`<button class="arrow" aria-label="展開">${icon(r.state)}</button>` : html`<span class="arrow"></span>`}
        ${r.root
          ? html`<div class="cell rootcell">${icon("eye")}<span class="root">${icon("component")}${r.label}</span>${icon("tHot")}
              <button class="active" aria-label="アクティブ化">${icon("radio")}</button></div>`
          : html`<div class="cell">
              ${r.eye ? html`<button aria-label="表示">${icon(r.eye)}</button>` : nothing}
              ${icon(r.glyph)}<span class="label">${r.label}</span></div>`}
      </li>`)}</ul>`;
  }
}

/* ---------- modelled body ---------- */

type Pt = [number, number];

/* Catmull-Rom spline through the points, written as cubic Béziers. */
function spline(p: Pt[], closed = false): string {
  const n = p.length;
  const at = (i: number): Pt => (closed ? p[(i + n) % n] : p[Math.max(0, Math.min(n - 1, i))]);
  let d = `M${p[0][0]} ${p[0][1]}`;
  for (let i = 0; i < (closed ? n : n - 1); i++) {
    const [a, b, c, e] = [at(i - 1), at(i), at(i + 1), at(i + 2)];
    d += `C${b[0] + (c[0] - a[0]) / 6} ${b[1] + (c[1] - a[1]) / 6} ${c[0] - (e[0] - b[0]) / 6} ${c[1] - (e[1] - b[1]) / 6} ${c[0]} ${c[1]}`;
  }
  return closed ? d + "Z" : d;
}

const rim: Pt[] = [
  [683, 450], [703, 364], [759, 290], [833, 241], [914, 212], [1004, 205], [1093, 223], [1173, 263],
  [1235, 322], [1267, 398], [1267, 480], [1240, 555], [1184, 622], [1104, 671], [1010, 697], [912, 692],
  [823, 662], [750, 607], [702, 529],
];
const hull: Pt[] = [
  [687, 492], [690, 555], [713, 617], [758, 677], [822, 724], [899, 753], [978, 762], [1060, 751], [1135, 720],
  [1200, 672], [1248, 609], [1271, 540], [1270, 442],
];
const crest: Pt[] = [[833, 241], [880, 241], [935, 249], [1000, 276], [1056, 326], [1110, 393], [1158, 457], [1202, 502], [1248, 539]];
const fold: Pt[] = [[925, 247], [865, 323], [804, 409], [755, 480], [708, 544]];
const ridge: Pt[] = [[804, 409], [885, 444], [965, 483], [1040, 523], [1115, 569], [1191, 617]];

/* x, y, rx, ry, rotation, colour */
const shade: [number, number, number, number, number, string][] = [
  [940, 208, 150, 30, -4, "#868a82"],
  [820, 295, 150, 32, -6, "#69655b"],
  [1060, 262, 120, 42, 6, "#66615a"],
  [1080, 400, 66, 150, -14, "#6f6d63"],
  [1110, 480, 110, 60, 25, "#74736a"],
  [1190, 360, 40, 90, -20, "#7d7a70"],
  [1228, 410, 22, 90, -6, "#8d8a83"],
  [1266, 440, 18, 100, 0, "#a19b8b"],
  [700, 420, 35, 90, 10, "#757166"],
  [770, 390, 60, 50, -40, "#84817a"],
  [870, 400, 80, 70, 15, "#8b8882"],
  [740, 480, 40, 60, 30, "#8c8983"],
  [830, 520, 120, 90, 10, "#96938a"],
  [800, 580, 110, 50, 10, "#9d998d"],
  [960, 570, 90, 50, 30, "#97948b"],
  [1060, 560, 60, 20, 30, "#8a8882"],
  [1200, 560, 50, 40, 0, "#95938e"],
  [1110, 625, 90, 40, -20, "#a09e91"],
  [810, 620, 100, 34, 10, "#a89c8d"],
  [960, 625, 90, 30, 0, "#aca799"],
  [840, 700, 120, 40, 20, "#bdb1a3"],
  [1080, 690, 90, 40, -20, "#b8b0a2"],
];

@customElement("model-view")
class ModelView extends LitElement {
  static styles = css`
    :host { display: block; }
    .scene { display: block; width: 100%; height: 100%; }
  `;

  render() {
    const edge = spline(rim, true);
    return html`
      <svg class="scene" viewBox="0 0 1920 850" role="img" aria-label="ボディ2">
        <defs>
          <linearGradient id="wall" gradientUnits="userSpaceOnUse" x1="684" y1="0" x2="1274" y2="0">
            <stop offset="0" stop-color="#8d877b"/><stop offset=".03" stop-color="#716e65"/><stop offset=".09" stop-color="#62615b"/>
            <stop offset=".4" stop-color="#585751"/><stop offset=".66" stop-color="#555049"/><stop offset=".85" stop-color="#514c44"/>
            <stop offset=".95" stop-color="#5d5850"/><stop offset=".985" stop-color="#706a60"/><stop offset="1" stop-color="#908a7e"/>
          </linearGradient>
          <radialGradient id="glint"><stop offset="0" stop-color="#fff"/><stop offset=".3" stop-color="#fdfcfa" stop-opacity=".95"/><stop offset=".6" stop-color="#f0ece2" stop-opacity=".45"/><stop offset="1" stop-color="#cfc8ba" stop-opacity="0"/></radialGradient>
          <filter id="soft" x="-50%" y="-50%" width="200%" height="200%"><feGaussianBlur stdDeviation="26"/></filter>
          <clipPath id="face"><path d=${edge}/></clipPath>
        </defs>
        <path d="${spline(hull)}L990 300Z" fill="url(#wall)"/>
        <path d=${spline(hull)} fill="none" stroke="#111" stroke-width="1.400"/>
        <g clip-path="url(#face)">
          <path d=${edge} fill="#807d73"/>
          <g filter="url(#soft)">
            <path d="M600 140h760v640H600z" fill="#807d73"/>
            ${shade.map(([x, y, rx, ry, a, c]) => svg`<ellipse cx=${x} cy=${y} rx=${rx} ry=${ry} fill=${c} transform="rotate(${a} ${x} ${y})"/>`)}
          </g>
          <ellipse cx="966" cy="688" rx="120" ry="110" fill="url(#glint)"/>
          <ellipse cx="915" cy="704" rx="130" ry="58" fill="url(#glint)"/>
        </g>
        <path d="${edge}${spline(crest)}${spline(fold)}${spline(ridge)}" fill="none" stroke="#111" stroke-width="1.400"/>
      </svg>`;
  }
}

@customElement("view-cube")
class ViewCube extends LitElement {
  static styles = css`
    :host { display: block; }
    .cube { display: block; overflow: visible; }
    .face { font-family: "Noto Sans CJK JP", sans-serif; font-weight: 500; fill: #8d9196; }
    .axis { font-family: "Liberation Sans", Arial, sans-serif; font-size: 13px; }
  `;

  render() {
    return html`
      <svg class="cube" width="120" height="110" viewBox="0 0 120 110" role="img" aria-label="ビューキューブ">
        <defs><filter id="drop" x="-50%" y="-50%" width="200%" height="200%"><feGaussianBlur stdDeviation="6"/></filter></defs>
        <path d="M52 78l34 18 28-22V52z" fill="#999" opacity=".55" filter="url(#drop)"/>
        <path d="M68 13l42 19-26 38-43-23z" fill="#f3f3f4"/><path d="M41 47l43 23v22L47 73z" fill="#e9e9ea"/>
        <path d="M84 70l26-38-3 33-23 27z" fill="#dedede"/><path d="M78 62l8-4 3 5-5 8z" fill="#dfe1e3"/>
        <path d="M68 13l42 19-26 38-43-23zM84 70v22L47 73M110 32l-3 33-23 27" fill="none" stroke="#999" stroke-dasharray="4 2" stroke-width=".8"/>
        <text class="face" font-size="27" transform="matrix(.86 .4 -.56 .78 58 47)">上</text>
        <text class="face" font-size="20" transform="matrix(.85 .5 .1 .65 56 73)">前</text>
        <text class="face" font-size="14" transform="matrix(.5 -.8 -.1 .9 92 76)">右</text>
        <path d="M39 43l8 30" stroke="#5a5af0" stroke-width="2"/><path d="M47 73l45 24" stroke="#f57f7f" stroke-width="2"/>
        <text class="axis" x="31" y="42" fill="#8d8df5">Z</text><text class="axis" x="93" y="106" fill="#f59a9a">X</text>
      </svg>`;
  }
}

/* ---------- viewport ---------- */

@customElement("app-viewport")
class AppViewport extends LitElement {
  private nav: [string, string, boolean][] = [
    ["orbit", "オービット", true], ["lookAt", "ビュー正面", false], ["pan", "画面移動", false], ["zoom", "ズーム", false], ["fit", "フィット", true],
    ["display", "表示設定", true], ["grid", "グリッドとスナップ", true], ["viewports", "ビューポート", true],
  ];
  private looks = ["shade1", "shade2", "shade3", "wire1", "wire2", "wire3"];

  static styles = [base, css`
    :host { position: relative; display: grid; grid-template-columns: 1fr auto 1fr; background: #fff; color: #333; }
    .model { position: absolute; inset: 0; }
    .left { position: relative; display: flex; flex-direction: column; justify-content: space-between; padding: 4px; }
    .panel { display: flex; align-items: center; width: 300px; height: 25px; padding: 0 8px 0 2px; border: 1px solid #c6c6c6; background: #f1f1f1; color: #555; }
    .panel h2 { flex: 1; margin: 0 0 0 6px; font-size: 11px; font-weight: 400; }
    .blank { width: 16px; }
    .nav { position: relative; align-self: end; display: flex; height: 24px; margin-bottom: 6px; padding-right: 2px; background: #f1f1f1; }
    .btn { gap: 4px; padding: 0 5px; }
    .btn.drop { padding-right: 0; }
    .split { width: 2px; margin: 0 1px; background: #d6d6d6; }
    .right { position: relative; display: flex; justify-content: flex-end; padding: 10px 20px 0 0; }
  `];

  render() {
    return html`
      <model-view class="model"></model-view>
      <aside class="left">
        <div>
          <div class="panel"><button aria-label="折りたたむ">${icon("collapse")}</button><h2>ブラウザ</h2><button aria-label="最小化">${icon("minusDot")}</button></div>
          <browser-tree></browser-tree>
        </div>
        <div class="panel"><span class="blank"></span><h2>コメント</h2><button aria-label="展開">${icon("plusDot")}</button></div>
      </aside>
      <nav class="nav" aria-label="ナビゲーション">
        ${this.nav.map(([n, l, d]) => html`<button class=${classMap({ btn: true, drop: d })} aria-label=${l}>${icon(n)}${d ? caret : nothing}</button>`)}
        <span class="split"></span>
        ${this.looks.map((n) => html`<button class="btn" aria-label="表示スタイル">${icon(n)}</button>`)}
      </nav>
      <div class="right"><view-cube></view-cube></div>`;
  }
}

/* ---------- timeline ---------- */

@customElement("app-timeline")
class AppTimeline extends LitElement {
  private features = ["form", "planeSmall", "sketchSmall", "extrudeBlue", "pushPull", "planeSmall", "sketchSmall", "extrudeOrange", "splitSmall"];

  static styles = [base, css`
    :host { display: flex; align-items: flex-start; height: 50px; padding: 11px 14px 0 8px; border-top: 1px solid #cfcfcf; background: #f1f1f1; }
    .play { display: flex; gap: 9px; padding-top: 4px; }
    .track { display: flex; margin-left: 18px; }
    .step { position: relative; align-items: flex-start; width: 24px; height: 30px; padding-top: 4px; }
    .step::before { content: ""; position: absolute; left: 0; right: 0; bottom: 0; height: 2px; background: #c9c9c9; }
    .step::after { content: ""; position: absolute; left: 12px; bottom: 0; width: 2px; height: 7px; background: #c9c9c9; }
    .step:first-child::before { left: 12px; }
    .step:last-of-type::before { right: 10px; }
    .marker { margin: -2px 0 0 -6px; }
    .settings { margin: 4px 0 0 auto; }
  `];

  render() {
    return html`
      <div class="play">
        ${[["first", "最初"], ["prev", "前へ"], ["play", "再生"], ["next", "次へ"], ["last", "最後"]].map(([n, l]) => html`<button aria-label=${l}>${icon(n)}</button>`)}
      </div>
      <div class="track">
        ${this.features.map((n) => html`<button class="step" aria-label="フィーチャ">${icon(n)}</button>`)}
        <svg class="marker" width="12" height="32" viewBox="0 0 12 32" aria-hidden="true"><path d="M0 0h12v4L7 10v22H5V10L0 4z" fill="#666"/></svg>
      </div>
      <button class="settings" aria-label="設定">${icon("gear")}</button>`;
  }
}

@customElement("app-root")
class AppRoot extends LitElement {
  static styles = css`
    :host {
      display: flex; flex-direction: column; min-height: 100vh; background: #fff;
      font-family: "Liberation Sans", "Noto Sans CJK JP", Arial, sans-serif;
      font-size: 11px; line-height: 16px; font-feature-settings: "palt"; color: #333;
    }
    .fill { flex: 1; }
  `;

  render() {
    return html`
      <app-header></app-header>
      <app-ribbon></app-ribbon>
      <app-viewport class="fill"></app-viewport>
      <app-timeline></app-timeline>`;
  }
}
